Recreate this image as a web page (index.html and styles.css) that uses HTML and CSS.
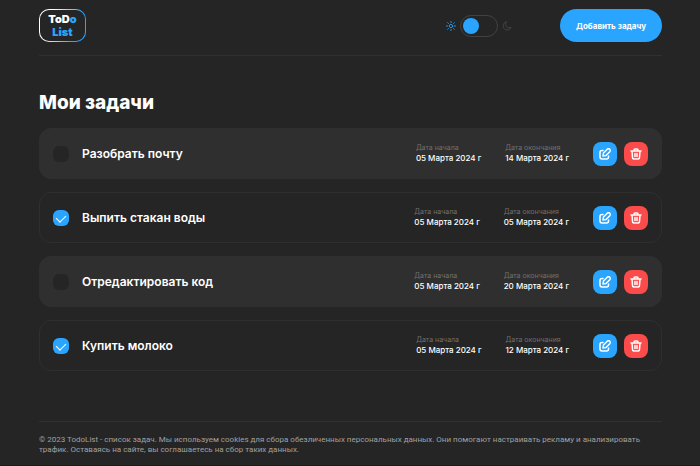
FILE: index.html
```
<!DOCTYPE html>
<html lang="ru">
<head>
  <meta charset="UTF-8" />
  <meta name="viewport" content="width=device-width, initial-scale=1.0"/>
  <title>ToDo List</title>
  <link rel="stylesheet" href="styles.css">
</head>
<body>

<!-- Icons -->
<svg class="sprite" aria-hidden="true">
  <symbol id="icon-edit" viewBox="0 0 24 24">
    <path d="M8 5H6a4 4 0 0 0-4 4v9a4 4 0 0 0 4 4h9a4 4 0 0 0 4-4v-2"/>
    <path d="M8 16l1-6 7.500-7.500a3.500 3.500 0 0 1 5 5L14 15z"/>
  </symbol>
  <symbol id="icon-trash" viewBox="0 0 24 24">
    <path d="M2 6h20M8 6V4a2 2 0 0 1 2-2h4a2 2 0 0 1 2 2v2M4 6l1 13a3 3 0 0 0 3 3h8a3 3 0 0 0 3-3l1-13M10 11v6M14 11v6"/>
  </symbol>
</svg>

<header class="header">
  <a href="#" class="logo">
    <span class="logo-top">ToD<span>o</span></span>
    <span class="logo-bottom">List</span>
  </a>

  <div class="theme">
    <svg class="icon-sun" viewBox="0 0 24 24">
      <circle cx="12" cy="12" r="4"/>
      <path d="M12 1v3M12 20v3M1 12h3M20 12h3M4 4l2 2M18 18l2 2M4 20l2-2M18 6l2-2"/>
    </svg>
    <input type="checkbox" class="switch" aria-label="Тёмная тема">
    <svg class="icon-moon" viewBox="0 0 24 24">
      <path d="M10 2a10 10 0 1 0 12 13A9 9 0 0 1 10 2z"/>
    </svg>
  </div>

  <button class="btn-add">Добавить задачу</button>
</header>

<main class="main">
  <h1>Мои задачи</h1>

  <ul class="tasks">
    <li class="task">
      <input type="checkbox" class="check" id="task1">
      <label for="task1">Разобрать почту</label>
      <div class="date"><span>Дата начала</span>05 Марта 2024 г</div>
      <div class="date"><span>Дата окончания</span>14 Марта 2024 г</div>
      <div class="actions">
        <button class="btn-edit" aria-label="Редактировать"><svg><use href="#icon-edit"/></svg></button>
        <button class="btn-delete" aria-label="Удалить"><svg><use href="#icon-trash"/></svg></button>
      </div>
    </li>
    <li class="task done">
      <input type="checkbox" class="check" id="task2" checked>
      <label for="task2">Выпить стакан воды</label>
      <div class="date"><span>Дата начала</span>05 Марта 2024 г</div>
      <div class="date"><span>Дата окончания</span>05 Марта 2024 г</div>
      <div class="actions">
        <button class="btn-edit" aria-label="Редактировать"><svg><use href="#icon-edit"/></svg></button>
        <button class="btn-delete" aria-label="Удалить"><svg><use href="#icon-trash"/></svg></button>
      </div>
    </li>
    <li class="task">
      <input type="checkbox" class="check" id="task3">
      <label for="task3">Отредактировать код</label>
      <div class="date"><span>Дата начала</span>05 Марта 2024 г</div>
      <div class="date"><span>Дата окончания</span>20 Марта 2024 г</div>
      <div class="actions">
        <button class="btn-edit" aria-label="Редактировать"><svg><use href="#icon-edit"/></svg></button>
        <button class="btn-delete" aria-label="Удалить"><svg><use href="#icon-trash"/></svg></button>
      </div>
    </li>
    <li class="task done">
      <input type="checkbox" class="check" id="task4" checked>
      <label for="task4">Купить молоко</label>
      <div class="date"><span>Дата начала</span>05 Марта 2024 г</div>
      <div class="date"><span>Дата окончания</span>12 Марта 2024 г</div>
      <div class="actions">
        <button class="btn-edit" aria-label="Редактировать"><svg><use href="#icon-edit"/></svg></button>
        <button class="btn-delete" aria-label="Удалить"><svg><use href="#icon-trash"/></svg></button>
      </div>
    </li>
  </ul>
</main>

<footer class="footer">
  © 2023 TodoList - список задач. Мы используем cookies для сбора обезличенных персональных данных. Они помогают настраивать рекламу и анализировать трафик. Оставаясь на сайте, вы соглашаетесь на сбор таких данных.
</footer>

</body>
</html>
```
FILE: styles.css
```
* {
  box-sizing: border-box;
}

body {
  margin: 0;
  min-height: 100vh;
  padding: 0 38px 0 39px;
  border-bottom: 2px solid #1e191c;
  background: #252525;
  color: #fff;
  font-family: Inter, "Open Sans", sans-serif;
}

button {
  border: none;
  padding: 0;
  color: #fff;
  font-family: inherit;
  cursor: pointer;
}

svg {
  fill: none;
  stroke: currentColor;
  stroke-width: 2;
  stroke-linecap: round;
  stroke-linejoin: round;
}

.sprite {
  display: none;
}

/* Header */
.header {
  display: flex;
  align-items: center;
  padding: 9px 0 13px;
  border-bottom: 1px solid #303030;
}

.logo {
  display: flex;
  flex-direction: column;
  align-items: center;
  justify-content: center;
  width: 47px;
  height: 33px;
  border: 1px solid transparent;
  border-radius: 10px;
  background: linear-gradient(#252525, #252525) padding-box,
    linear-gradient(110deg, #fff 25%, #29a5ff 75%) border-box;
  color: #fff;
  font-size: 11px;
  font-weight: 900;
  line-height: 13px;
  text-decoration: none;
}

.logo-top span,
.logo-bottom {
  color: #29a5ff;
}

.theme {
  display: flex;
  align-items: center;
  gap: 4px;
  margin-left: auto;
  margin-right: 48px;
}

.icon-sun,
.icon-moon {
  width: 10px;
  height: 10px;
}

.icon-sun {
  color: #29a5ff;
}

.icon-moon {
  color: #484848;
}

.switch {
  appearance: none;
  display: flex;
  align-items: center;
  width: 38px;
  height: 22px;
  margin: 0;
  padding: 0 2px;
  border: 1px solid #414141;
  border-radius: 11px;
  cursor: pointer;
}

.switch::before {
  content: "";
  width: 16px;
  height: 16px;
  border-radius: 50%;
  background: #29a5ff;
}

.switch:checked::before {
  margin-left: auto;
}

.btn-add {
  padding: 0 16px;
  height: 33px;
  border-radius: 17px;
  background: #29a5ff;
  font-size: 8px;
  font-weight: 700;
}

/* Tasks */
h1 {
  margin: 35px 0 14px;
  font-size: 19px;
  font-weight: 800;
  line-height: 23px;
}

.tasks {
  display: flex;
  flex-direction: column;
  gap: 13px;
  margin: 0;
  padding: 0;
  list-style: none;
}

.task {
  display: flex;
  align-items: center;
  height: 51px;
  padding: 0 13px;
  border: 1px solid #2f2f2f;
  border-radius: 12px;
  background: #2f2f2f;
}

.task.done {
  background: transparent;
}

.task label {
  flex: 1;
  margin-left: 13px;
  font-size: 12px;
  font-weight: 600;
  line-height: 16px;
}

.check {
  appearance: none;
  width: 16px;
  height: 16px;
  margin: 0;
  border-radius: 6px;
  background: #252525;
}

.check:checked {
  display: flex;
  justify-content: center;
  background: #29a5ff;
}

.check:checked::before {
  content: "";
  width: 5px;
  height: 8px;
  margin-top: 3px;
  border: solid #fff;
  border-width: 0 1px 1px 0;
  transform: rotate(45deg);
}

.date {
  margin-right: 24px;
  font-size: 8px;
  font-weight: 500;
  line-height: 11px;
}

.date span {
  display: block;
  color: #6f6f6f;
  font-size: 7px;
  font-weight: 400;
  line-height: 10px;
}

.actions {
  display: flex;
  gap: 7px;
}

.actions button {
  display: flex;
  align-items: center;
  justify-content: center;
  width: 24px;
  height: 24px;
  border-radius: 8px;
}

.actions svg {
  width: 12px;
  height: 12px;
  stroke-width: 3;
}

.btn-edit {
  background: #29a5ff;
}

.btn-delete {
  background: #fb4b4b;
}

/* Footer */
.footer {
  margin-top: 50px;
  padding: 13px 0 10px;
  border-top: 1px solid #303030;
  color: #a0a0a0;
  font-family: Roboto, sans-serif;
  font-size: 8px;
  line-height: 10px;
}
```
